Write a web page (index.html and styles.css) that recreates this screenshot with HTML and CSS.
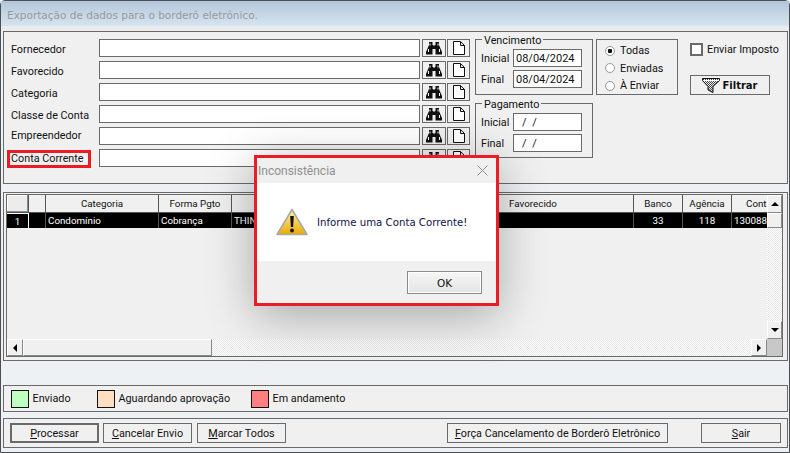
FILE: index.html
```html
<!DOCTYPE html>
<html lang="pt-BR">
<head>
  <meta charset="UTF-8" />
  <title>Exportação de dados para o borderô eletrônico</title>
  <link rel="stylesheet" href="styles.css">
</head>
<body>
  <div class="window">
    <div class="titlebar">Exportação de dados para o borderô eletrônico.</div>

    <div class="panel filter-panel">
      <div class="fields">
        <div class="field-row"><label class="low">Fornecedor</label><input type="text" /><button class="icon-btn"><svg width="18" height="14"><use href="#binoc" /></svg></button><button class="icon-btn"><svg width="12" height="14"><use href="#doc" /></svg></button></div>
        <div class="field-row"><label class="low">Favorecido</label><input type="text" /><button class="icon-btn"><svg width="18" height="14"><use href="#binoc" /></svg></button><button class="icon-btn"><svg width="12" height="14"><use href="#doc" /></svg></button></div>
        <div class="field-row"><label class="low">Categoria</label><input type="text" /><button class="icon-btn"><svg width="18" height="14"><use href="#binoc" /></svg></button><button class="icon-btn"><svg width="12" height="14"><use href="#doc" /></svg></button></div>
        <div class="field-row"><label class="low">Classe de Conta</label><input type="text" /><button class="icon-btn"><svg width="18" height="14"><use href="#binoc" /></svg></button><button class="icon-btn"><svg width="12" height="14"><use href="#doc" /></svg></button></div>
        <div class="field-row"><label>Empreendedor</label><input type="text" /><button class="icon-btn"><svg width="18" height="14"><use href="#binoc" /></svg></button><button class="icon-btn"><svg width="12" height="14"><use href="#doc" /></svg></button></div>
        <div class="field-row"><label><span class="mark">Conta Corrente</span></label><input type="text" /><button class="icon-btn"><svg width="18" height="14"><use href="#binoc" /></svg></button><button class="icon-btn"><svg width="12" height="14"><use href="#doc" /></svg></button></div>
      </div>

      <div class="dates">
        <fieldset class="date-box">
          <legend>Vencimento</legend>
          <div class="date-row"><span>Inicial</span><input type="text" value="08/04/2024" /></div>
          <div class="date-row"><span>Final</span><input type="text" value="08/04/2024" /></div>
        </fieldset>
        <fieldset class="date-box short">
          <legend>Pagamento</legend>
          <div class="date-row"><span>Inicial</span><input class="empty" type="text" value="/ /" /></div>
          <div class="date-row"><span>Final</span><input class="empty" type="text" value="/ /" /></div>
        </fieldset>
      </div>

      <div class="radios">
        <div class="radio-row"><i class="radio on"></i>Todas</div>
        <div class="radio-row"><i class="radio"></i>Enviadas</div>
        <div class="radio-row"><i class="radio"></i>À Enviar</div>
      </div>

      <div class="side">
        <div class="check-row"><i class="check"></i>Enviar Imposto</div>
        <button class="btn filter-btn">
          <svg width="18" height="15" viewBox="0 0 18 15">
            <defs>
              <pattern id="hatch" width="2" height="2" patternUnits="userSpaceOnUse"><rect width="2" height="2" fill="#eee" /><rect width="1" height="1" fill="#444" /><rect x="1" y="1" width="1" height="1" fill="#444" /></pattern>
            </defs>
            <path d="M.5 .5h17v2l-6.500 6v6l-5-2.500V8.500l-5.500-6z" fill="url(#hatch)" stroke="#111" stroke-width="1" />
            <path d="M1 2.500h16" stroke="#fff" stroke-width="1" />
          </svg>
          Filtrar
        </button>
      </div>
    </div>

    <div class="panel grid-panel">
      <div class="grid">
        <div class="grid-body">
          <div class="grid-row head">
            <div class="cell c0"></div><div class="cell c1"></div><div class="cell c2">Categoria</div><div class="cell c3">Forma Pgto</div><div class="cell c4"></div><div class="cell c5">Favorecido</div><div class="cell c6">Banco</div><div class="cell c7">Agência</div><div class="cell c8 head-clip">Cont</div>
          </div>
          <div class="grid-row data">
            <div class="cell c0 num">1</div><div class="cell c1"></div><div class="cell c2 left">Condomínio</div><div class="cell c3 left">Cobrança</div><div class="cell c4 left">THIN</div><div class="cell c5"></div><div class="cell c6">33</div><div class="cell c7">118</div><div class="cell c8 data-clip">130088</div>
          </div>
        </div>
        <div class="vscroll">
          <div class="sb-btn"><i class="arrow up"></i></div>
          <div class="sb-thumb"></div>
          <div class="sb-track"></div>
          <div class="sb-btn"><i class="arrow down"></i></div>
        </div>
        <div class="hscroll">
          <div class="sb-btn"><i class="arrow left"></i></div>
          <div class="sb-thumb"></div>
          <div class="sb-track"></div>
          <div class="sb-btn"><i class="arrow right"></i></div>
        </div>
        <div class="corner"></div>
      </div>
    </div>

    <div class="panel legend-panel">
      <div class="legend-item item-1"><i class="swatch green"></i>Enviado</div>
      <div class="legend-item item-2"><i class="swatch peach"></i>Aguardando aprovação</div>
      <div class="legend-item"><i class="swatch red"></i>Em andamento</div>
    </div>

    <div class="panel action-panel">
      <button class="btn action default"><u>P</u>rocessar</button>
      <button class="btn action"><u>C</u>ancelar Envio</button>
      <button class="btn action"><u>M</u>arcar Todos</button>
      <button class="btn action force"><u>F</u>orça Cancelamento de Borderô Eletrônico</button>
      <button class="btn action exit"><u>S</u>air</button>
    </div>
  </div>

  <div class="dialog">
    <div class="dialog-title">
      <span>Inconsistência</span>
      <svg width="11" height="11" viewBox="0 0 11 11"><path d="M.5 .5l10 10M10.500 .5l-10 10" stroke="#8f8f8f" stroke-width="1" /></svg>
    </div>
    <div class="dialog-body">
      <svg width="32" height="28" viewBox="0 0 32 28">
        <defs>
          <linearGradient id="warn" x1="0" y1="0" x2="0" y2="1"><stop offset="0" stop-color="#fff3a8" /><stop offset="1" stop-color="#e9ab00" /></linearGradient>
        </defs>
        <path d="M16 1.500L31 26.500H1z" fill="url(#warn)" stroke="#a9a9a9" stroke-width="1.600" stroke-linejoin="round" />
        <path d="M14.200 8h3.600l-.7 11h-2.200z" fill="#111" />
        <circle cx="16" cy="22.500" r="1.900" fill="#111" />
      </svg>
      <p>Informe uma Conta Corrente!</p>
    </div>
    <div class="dialog-foot"><button class="ok-btn">OK</button></div>
  </div>

  <svg class="defs" width="0" height="0">
    <symbol id="binoc" viewBox="0 0 18 14">
      <path d="M4 1h3.500v3h1v1h1V4h1V1H14v3l3 7v2.500h-6.500V8h-3v5.500H1V11l3-7z" fill="#111" />
      <path d="M5 2.500v2M13 2.500v2M3.500 8v3M14.500 8v3" stroke="#fff" stroke-width="1" />
    </symbol>
    <symbol id="doc" viewBox="0 0 12 14">
      <path d="M.5 .5h7l4 4v9h-11zM7.500 .5v4h4" fill="#fff" stroke="#111" stroke-width="1" />
    </symbol>
  </svg>
</body>
</html>
```

FILE: styles.css
```css
* {
  box-sizing: border-box;
}
html, body {
  margin: 0;
  padding: 0;
  height: 453px;
  overflow: hidden;
}
body {
  position: relative;
  font-family: Roboto, sans-serif;
  font-size: 10.8px;
  color: #111;
  background: #eef1f4;
}
input, button {
  font-family: inherit;
  margin: 0;
}
.defs {
  position: absolute;
}
.window {
  height: 453px;
  border: 1px solid #4a4f55;
  border-radius: 5px 5px 0 0;
  background: #eef1f4;
  display: flex;
  flex-direction: column;
}
.titlebar {
  height: 30px;
  padding: 8px 0 0 6px;
  background: linear-gradient(#b3c7d9, #d6e4f1 25px, #ececec 25px);
  color: #9a9a9a;
  font-family: "DejaVu Sans", sans-serif;
  font-size: 10.5px;
}
.panel {
  flex: none;
  margin: 0 1px 0 2px;
  background: #f0f0f0;
  border: 1px solid #6a6a6a;
}

/* filtros */
.filter-panel {
  height: 153px;
  padding: 7px 0 0 7px;
  display: flex;
}
.fields {
  display: flex;
  flex-direction: column;
  gap: 4px;
}
.field-row {
  display: flex;
  height: 18px;
}
.field-row label {
  display: block;
  width: 88px;
  line-height: 18px;
}
.field-row label.low {
  padding-top: 2px;
}
.field-row input {
  width: 321px;
  height: 18px;
  border: 1px solid #6a6a6a;
  background: #fff;
  margin-right: 2px;
}
.mark {
  display: block;
  width: 84px;
  margin: 1px 0 0 -4px;
  padding-left: 4px;
  outline: 3px solid #ed1c24;
  outline-offset: -3px;
  line-height: 18px;
  white-space: nowrap;
}
.icon-btn {
  width: 24px;
  height: 18px;
  padding: 0;
  margin-right: 1px;
  border: 1px solid #6a6a6a;
  background: #f0f0f0;
  display: flex;
  align-items: center;
  justify-content: center;
}
.icon-btn + .icon-btn {
  width: 23px;
  margin-right: 0;
}
.dates {
  margin-left: 5px;
  display: flex;
  flex-direction: column;
  gap: 8px;
}
.date-box {
  position: relative;
  width: 118px;
  height: 56px;
  margin: 0;
  padding: 9px 0 0 5px;
  border: 1px solid #6a6a6a;
}
.date-box.short {
  height: 55px;
}
.date-box legend {
  position: absolute;
  top: -6px;
  left: 6px;
  padding: 0 2px;
  background: #f0f0f0;
  line-height: 13px;
}
.date-row {
  display: flex;
  align-items: center;
  height: 18px;
  margin-bottom: 3px;
}
.date-row span {
  width: 32px;
}
.date-row input {
  width: 69px;
  height: 18px;
  padding: 0 2px;
  border: 1px solid #6a6a6a;
  background: #fff;
  font-size: 11px;
  color: #111;
}
.date-row input.empty {
  padding-left: 8px;
  word-spacing: 3px;
}
.radios {
  width: 82px;
  height: 56px;
  margin-left: 3px;
  padding: 2px 0 0 8px;
  border: 1px solid #6a6a6a;
}
.radio-row {
  display: flex;
  align-items: center;
  gap: 5px;
  height: 17.5px;
}
.radio {
  width: 10px;
  height: 10px;
  border-radius: 50%;
  border: 1px solid #9a9a9a;
  background: #fff;
  display: block;
}
.radio.on {
  background: radial-gradient(circle, #111 0 2px, #fff 2.5px);
}
.side {
  margin-left: 12px;
}
.check-row {
  display: flex;
  align-items: center;
  gap: 4px;
  height: 16px;
  margin-top: 2px;
  white-space: nowrap;
}
.check {
  width: 13px;
  height: 13px;
  border: 2px solid #6a6a6a;
  background: #fff;
  display: block;
}
.btn {
  border: 1px solid #6a6a6a;
  background: #f0f0f0;
  color: #111;
}
.filter-btn {
  width: 80px;
  height: 20px;
  margin-top: 18px;
  padding: 0;
  display: flex;
  align-items: center;
  justify-content: center;
  gap: 2px;
  font-family: "DejaVu Sans", sans-serif;
  font-size: 10px;
  font-weight: bold;
}

/* grid */
.grid-panel {
  height: 169px;
  margin-top: 8px;
  padding: 1px 4px 3px 2px;
}
.grid {
  height: 163px;
  border: 1px solid #6a6a6a;
  display: grid;
  grid-template-columns: 760px 1fr;
  grid-template-rows: 1fr 17px;
  background: #f0f0f0;
}
.grid-body {
  overflow: hidden;
}
.grid-row {
  display: flex;
  font-size: 9.8px;
}
.grid-row.head {
  height: 18px;
  line-height: 17px;
}
.grid-row.head .cell {
  background: #f0f0f0;
  border-right: 1px solid #555;
  border-bottom: 1px solid #555;
}
.grid-row.data {
  height: 15px;
  line-height: 15px;
  background: #000;
  color: #fff;
}
.grid-row.data .cell {
  border-right: 1px solid #555;
}
.cell {
  flex: none;
  overflow: hidden;
  white-space: nowrap;
  text-align: center;
}
.cell.left {
  text-align: left;
  padding-left: 2px;
}
.cell.num {
  border-top: 1px solid #fff;
  border-right-color: #fff !important;
}
.c0 { width: 22px; }
.c1 { width: 17px; }
.c2 { width: 113px; }
.c3 { width: 73px; }
.c4 { width: 201px; }
.c5 { width: 201px; }
.c6 { width: 49px; }
.c7 { width: 49px; }
.c8 { width: 35px; border-right: 0 !important; text-align: left; }
.head-clip { padding-left: 14px; }
.data-clip { padding-left: 2px; }
.grid-row.head .c0 {
  background: #ececec;
  box-shadow: inset -1px -1px 0 #888, inset 1px 1px 0 #fff;
}
.vscroll {
  display: flex;
  flex-direction: column;
}
.hscroll {
  display: flex;
}
.sb-btn {
  flex: none;
  width: 15px;
  height: 18px;
  background: #f0f0f0;
  border: 1px solid #fff;
  border-right-color: #888;
  border-bottom-color: #888;
  display: flex;
  align-items: center;
  justify-content: center;
}
.hscroll .sb-btn {
  width: 16px;
  height: 17px;
}
.sb-thumb {
  flex: none;
  height: 15px;
  background: #f0f0f0;
  border: 1px solid #fff;
  border-right-color: #888;
  border-bottom-color: #888;
}
.hscroll .sb-thumb {
  width: 189px;
  height: 17px;
}
.sb-track {
  flex: 1;
  background: repeating-conic-gradient(#e6e6e6 0 25%, #fff 0 50%) 0 0 / 2px 2px;
}
.corner {
  background: #c8c8c8;
}
.arrow {
  width: 0;
  height: 0;
  display: block;
  border: 4px solid transparent;
}
.arrow.up { border-top: 0; border-bottom-color: #000; }
.arrow.down { border-bottom: 0; border-top-color: #000; }
.arrow.left { border-left: 0; border-right-color: #000; }
.arrow.right { border-right: 0; border-left-color: #000; }

/* legenda */
.legend-panel {
  height: 27px;
  margin-top: 24px;
  padding-left: 7px;
  display: flex;
  align-items: center;
}
.legend-item {
  display: flex;
  align-items: center;
  gap: 3.5px;
}
.item-1 { width: 86px; }
.item-2 { width: 154px; }
.swatch {
  width: 18px;
  height: 18px;
  border: 1px solid #111;
  display: block;
}
.swatch.green { background: #c0ffc0; }
.swatch.peach { background: #ffdfc0; }
.swatch.red { background: #ff8080; }

/* botoes */
.action-panel {
  height: 30px;
  margin-top: 6px;
  padding: 4px 0 0 6px;
  display: flex;
}
.action {
  width: 89px;
  height: 20px;
  margin-right: 5px;
  padding: 0;
  font-size: 10.8px;
  white-space: nowrap;
}
.action.default {
  border: 2px solid #6a6a6a;
  margin-right: 4px;
}
.action.force {
  width: 221px;
  margin: 0 33px 0 156px;
}
.action.exit {
  width: 80px;
  margin: 0;
}

/* dialogo */
.dialog {
  position: absolute;
  left: 254px;
  top: 155px;
  width: 245px;
  height: 151px;
  border: 3px solid #ed1c24;
  background: #f0f0f0;
  box-shadow: 0 10px 45px rgba(0, 0, 0, .3);
  display: flex;
  flex-direction: column;
}
.dialog-title {
  height: 25px;
  padding: 0 8px 0 1px;
  display: flex;
  align-items: center;
  justify-content: space-between;
  color: #8f8f8f;
  font-size: 12px;
}
.dialog-body {
  height: 78px;
  padding-left: 19px;
  background: #fff;
  display: flex;
  align-items: center;
  gap: 9px;
}
.dialog-body p {
  margin: 0;
  font-family: "DejaVu Sans", sans-serif;
  font-size: 10.2px;
  color: #10104a;
}
.dialog-foot {
  flex: 1;
  padding: 10px 14px 0 0;
  display: flex;
  justify-content: flex-end;
  align-items: flex-start;
}
.ok-btn {
  width: 75px;
  height: 23px;
  padding: 0;
  border: 1px solid #8a8a8a;
  background: linear-gradient(#f6f6f6, #e4e4e4);
  box-shadow: inset 0 0 0 1px #fff;
  font-family: "DejaVu Sans", sans-serif;
  font-size: 10.5px;
  color: #111;
}
```
